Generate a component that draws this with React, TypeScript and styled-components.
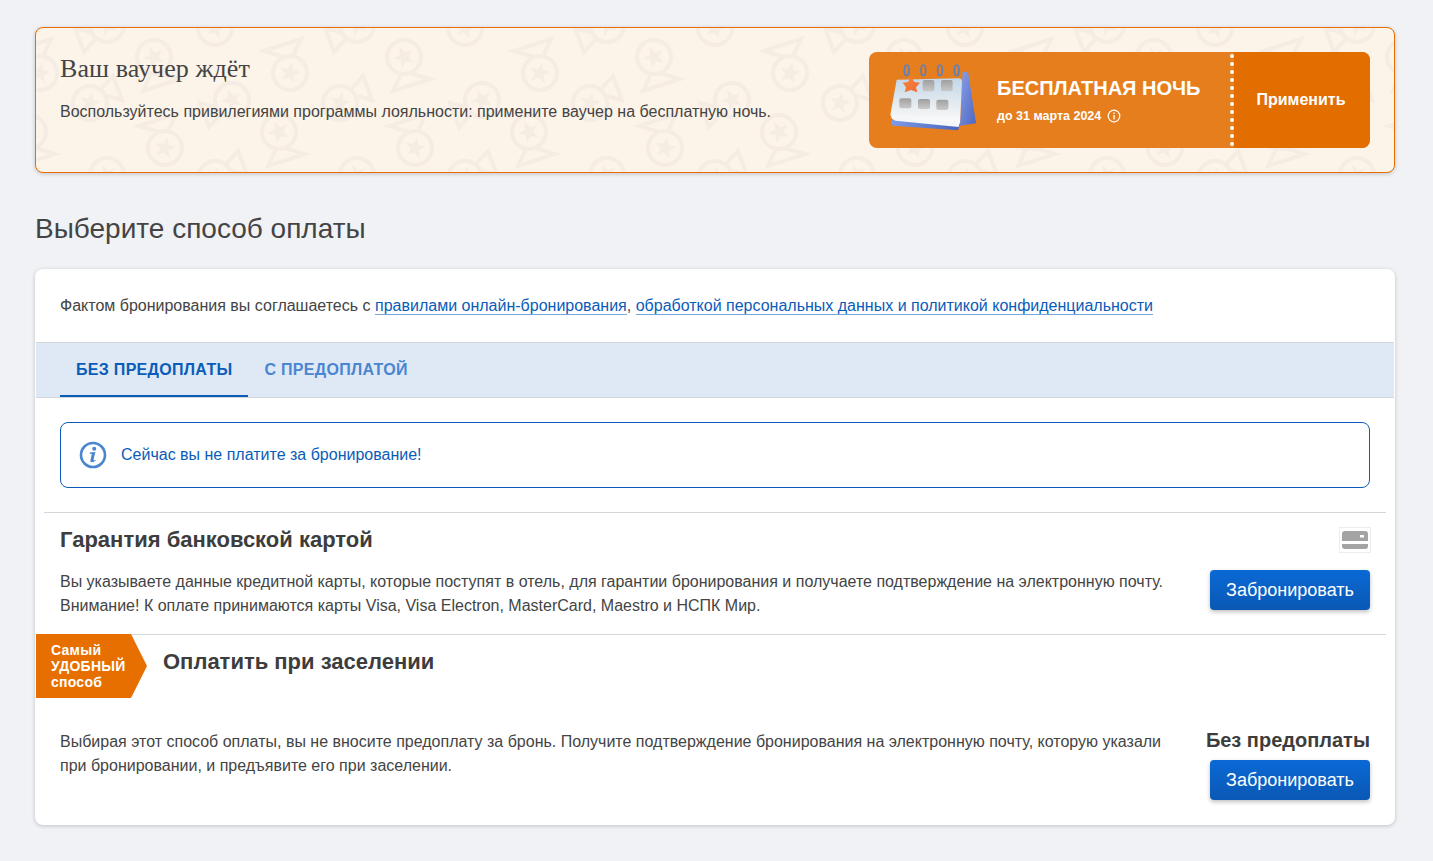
import React from 'react'
import styled, { createGlobalStyle } from 'styled-components'

// medal wallpaper of the banner, one 250x150 tile
const medals = [
  { x: 4, y: 45, kind: 'a', turn: 0 },
  { x: 129, y: 120, kind: 'a', turn: 0 },
  { x: 118, y: 29, kind: 'a', turn: 180 },
  { x: 243, y: 104, kind: 'a', turn: 180 },
  { x: 54, y: 75, kind: 'c', turn: 0 },
  { x: 179, y: 0, kind: 'c', turn: 0 },
  { x: 71, y: 147, kind: 'c', turn: 180 },
  { x: 196, y: 72, kind: 'c', turn: 180 },
]

const medalUses = medals
  .flatMap((m) =>
    [-250, 0, 250].flatMap((dx) =>
      [-150, 0, 150].map(
        (dy) =>
          `<use href="#${m.kind}" transform="translate(${m.x + dx} ${m.y + dy}) rotate(${m.turn})"/>`
      )
    )
  )
  .join('')

const medalStar =
  '<path fill="#f5ece3" stroke="none" transform="rotate(12)" d="M0 -11 L2.7 -3.7 L10.5 -3.4 L4.4 1.4 L6.5 8.9 L0 4.6 L-6.5 8.9 L-4.4 1.4 L-10.5 -3.4 L-2.7 -3.7 Z"/>'

const medalTile = encodeURIComponent(`<svg xmlns="http://www.w3.org/2000/svg" width="250" height="150" viewBox="0 0 250 150">
<defs>
<g id="a" fill="none" stroke="#f5ece3" stroke-width="4"><circle r="17"/><path d="M3 -17 L11 -34 L-26 -22 L-6 -16"/>${medalStar}</g>
<g id="c" fill="none" stroke="#f5ece3" stroke-width="4"><circle r="17"/><path d="M11 -14 L23 -27 L32 -3 L17 -7"/>${medalStar}</g>
</defs>${medalUses}</svg>`)

const GlobalStyle = createGlobalStyle`
  html, body {
    margin: 0;
    padding: 0;
    background: #f0f2f6;
  }
  body {
    font-family: "Liberation Sans", Arial, sans-serif;
    color: #444;
  }
  * {
    box-sizing: border-box;
  }
`

const Page = styled.div`
  width: 1433px;
  height: 861px;
  padding: 27px 38px 0 35px;
`

const Banner = styled.section`
  display: flex;
  justify-content: space-between;
  height: 146px;
  padding: 24px;
  background-color: #fcf3e9;
  background-image: url("data:image/svg+xml,${medalTile}");
  border: 1px solid #e66f00;
  border-radius: 8px;
  box-shadow: 0 1px 4px rgba(0, 0, 0, 0.2);
`

const BannerText = styled.div`
  display: flex;
  flex-direction: column;
`

const BannerTitle = styled.h2`
  margin: 1px 0 0;
  font-family: "Liberation Serif", "Times New Roman", serif;
  font-size: 26px;
  line-height: 32px;
  letter-spacing: 0.07px;
  font-weight: 400;
  color: #444;
`

const BannerNote = styled.p`
  margin: 15px 0 0;
  font-size: 16px;
  line-height: 24px;
  color: #444;
`

const Voucher = styled.div`
  display: flex;
  width: 501px;
  height: 96px;
  border-radius: 8px;
  overflow: hidden;
  color: #fff;
  background: #e67e1d;
`

const VoucherMain = styled.div`
  display: flex;
  align-items: center;
  flex: 1;
  margin: 2px 0;
  padding-left: 11px;
  border-right: 4px dotted #fff;
`

const VoucherArt = styled.svg`
  flex: none;
  margin-top: -5px;
`

const VoucherCopy = styled.div`
  margin-left: 7px;
  margin-top: -1px;
`

const VoucherTitle = styled.div`
  font-size: 20px;
  line-height: 28px;
  font-weight: 700;
`

const VoucherDate = styled.div`
  display: flex;
  align-items: center;
  gap: 6px;
  margin-top: 4px;
  font-size: 12.5px;
  line-height: 20px;
  font-weight: 700;
`

const Apply = styled.div`
  display: flex;
  align-items: center;
  justify-content: center;
  width: 136px;
  margin: -2px 0;
  padding-right: 2px;
  background: #e36e00;
  font-size: 16px;
  font-weight: 700;
`

const Heading = styled.h1`
  margin: 38px 0 22px;
  font-size: 28px;
  line-height: 36px;
  font-weight: 400;
  color: #444;
`

const Card = styled.section`
  height: 556px;
  padding: 0 1px;
  background: #fff;
  border-radius: 8px;
  box-shadow: 0 1px 4px rgba(0, 0, 0, 0.2);
`

const Terms = styled.p`
  margin: 0;
  height: 73px;
  padding: 25px 24px 0;
  font-size: 16px;
  line-height: 24px;
  color: #444;
`

const TermsLink = styled.a`
  color: #0a5cb8;
  border-bottom: 1px solid #7ba6d8;
  text-decoration: none;
`

const Tabs = styled.div`
  display: flex;
  height: 56px;
  padding-left: 24px;
  background: #dfe9f6;
  border-top: 1px solid #d3d6da;
  border-bottom: 1px solid #d3d6da;
`

const Tab = styled.div<{ $active?: boolean }>`
  display: flex;
  align-items: center;
  height: 54px;
  padding: 2px 16px 0;
  font-size: 16px;
  letter-spacing: 0.3px;
  font-weight: 700;
  color: ${({ $active }) => ($active ? '#0a5cb8' : '#4a86cf')};
  border-bottom: 2px solid ${({ $active }) => ($active ? '#0a5cb8' : 'transparent')};
`

const Notice = styled.div`
  display: flex;
  align-items: center;
  gap: 14px;
  height: 66px;
  margin: 24px;
  padding: 0 18px;
  border: 1px solid #0a5cb8;
  border-radius: 8px;
  font-size: 16px;
  color: #0a5cb8;
`

const Option = styled.div`
  height: 122px;
  margin: 0 8px;
  padding: 0 16px;
  border-top: 1px solid #d3d6da;
`

const OptionHead = styled.div`
  display: flex;
  justify-content: space-between;
  align-items: flex-start;
  height: 57px;
  padding-top: 14px;
`

const OptionTitle = styled.h3`
  margin: 0;
  font-size: 22px;
  line-height: 26px;
  font-weight: 700;
  color: #3d3d3d;
`

const CardIcon = styled.div`
  display: flex;
  align-items: center;
  justify-content: center;
  width: 32px;
  height: 26px;
  margin-right: -1px;
  border: 1px solid #ececec;
`

const OptionBody = styled.div`
  display: flex;
  justify-content: space-between;
  align-items: flex-start;
`

const OptionText = styled.p`
  margin: 0;
  width: 1120px;
  font-size: 16px;
  line-height: 24px;
  color: #444;
`

const BookButton = styled.button`
  width: 160px;
  height: 40px;
  padding: 0;
  border: 0;
  border-radius: 4px;
  font-family: inherit;
  font-size: 18px;
  color: #fff;
  background: linear-gradient(#0a69d6, #0a58b4);
  box-shadow: 0 2px 4px rgba(0, 0, 0, 0.25);
`

const PayRule = styled.div`
  height: 1px;
  margin-right: 8px;
  background: #d3d6da;
`

const PayHead = styled.div`
  display: flex;
  align-items: flex-start;
  gap: 16px;
  height: 96px;
  margin-top: -1px;
`

const Badge = styled.div`
  width: 111px;
  height: 64px;
  padding: 8px 0 0 15px;
  background: #e66f00;
  clip-path: polygon(0 0, 95px 0, 100% 50%, 95px 100%, 0 100%);
  color: #fff;
  font-size: 14px;
  letter-spacing: 0.25px;
  line-height: 16px;
  font-weight: 700;
`

const PayTitle = styled(OptionTitle)`
  margin-top: 15px;
`

const PayBody = styled(OptionBody)`
  padding: 0 24px;
`

const PaySide = styled.div`
  display: flex;
  flex-direction: column;
  align-items: flex-end;
  gap: 6px;
`

const PriceNote = styled.div`
  margin-top: -4px;
  font-size: 20px;
  line-height: 28px;
  font-weight: 700;
  color: #3d3d3d;
`

function CalendarArt() {
  return (
    <VoucherArt width="110" height="85" viewBox="0 0 330 255">
      <defs>
        <linearGradient id="calBack" x1="0" y1="0" x2="1" y2="1">
          <stop offset="0" stopColor="#86a0ea" />
          <stop offset="1" stopColor="#4f66c0" />
        </linearGradient>
        <linearGradient id="calCover" x1="0" y1="0" x2="1" y2="0">
          <stop offset="0" stopColor="#7d9be6" />
          <stop offset="1" stopColor="#4a63bd" />
        </linearGradient>
        <linearGradient id="calPage" x1="0" y1="0" x2="0" y2="1">
          <stop offset="0" stopColor="#c3d7e8" />
          <stop offset="0.6" stopColor="#e6ecf0" />
          <stop offset="1" stopColor="#fbfbfb" />
        </linearGradient>
        <linearGradient id="calCell" x1="0" y1="0" x2="0" y2="1">
          <stop offset="0" stopColor="#9f9f9f" />
          <stop offset="1" stopColor="#c9c9c9" />
        </linearGradient>
        <linearGradient id="calStar" x1="0" y1="0" x2="1" y2="1">
          <stop offset="0" stopColor="#f2873f" />
          <stop offset="1" stopColor="#f4682f" />
        </linearGradient>
      </defs>
      <path d="M248 50 L264 50 L288 205 L240 212 Z" fill="url(#calBack)" />
      <path d="M36 194 L240 208 L234 226 L40 212 Q30 208 36 194 Z" fill="url(#calCover)" />
      <path d="M32 178 L240 200 L236 216 L46 197 Q32 192 32 178 Z" fill="#f4f6f8" />
      <path d="M50 74 L236 70 Q246 70 246 80 L240 204 L38 184 Q30 182 32 174 Z" fill="url(#calPage)" />
      {[80, 130, 180, 230].map((x) => (
        <ellipse key={x} cx={x} cy="46" rx="7" ry="16" fill="none" stroke="#5f7fbc" strokeWidth="5" />
      ))}
      <path
        d="M93 64 L103 81 L120 83 L108 97 L112 112 L93 105 L74 112 L78 97 L68 83 L84 81 Z"
        fill="url(#calStar)"
      />
      <rect x="128" y="75" width="35" height="34" rx="6" fill="url(#calCell)" />
      <rect x="183" y="75" width="35" height="34" rx="6" fill="url(#calCell)" />
      <rect x="58" y="130" width="36" height="30" rx="6" fill="url(#calCell)" />
      <rect x="114" y="132" width="36" height="30" rx="6" fill="url(#calCell)" />
      <rect x="169" y="134" width="36" height="31" rx="6" fill="url(#calCell)" />
    </VoucherArt>
  )
}

function SmallInfo() {
  return (
    <svg width="14" height="14" viewBox="0 0 14 14">
      <circle cx="7" cy="7" r="5.8" fill="none" stroke="#fff" strokeWidth="1.2" />
      <rect x="6.3" y="6" width="1.4" height="4.4" fill="#fff" />
      <rect x="6.3" y="3.6" width="1.4" height="1.4" fill="#fff" />
    </svg>
  )
}

function NoticeIcon() {
  return (
    <svg width="28" height="28" viewBox="0 0 28 28">
      <circle cx="14" cy="14" r="12" fill="none" stroke="#4a86cf" strokeWidth="2.6" />
      <path
        d="M10.8 11.6 L16.4 11 L14.6 18.6 Q14.4 19.6 15.2 19.4 L16.4 18.8 L16.6 19.8 Q14.6 21.4 12.6 21.2 Q11 21 11.4 19.2 L12.8 13 L10.8 12.8 Z"
        fill="#4a86cf"
      />
      <circle cx="15.2" cy="7.8" r="2" fill="#4a86cf" />
    </svg>
  )
}

function BankCardIcon() {
  return (
    <svg width="26" height="18" viewBox="0 0 26 18">
      <path d="M3 0 H23 a3 3 0 0 1 3 3 V10 H0 V3 a3 3 0 0 1 3 -3 Z" fill="#a3a3a3" />
      <rect x="18" y="4" width="4" height="2.5" fill="#fff" />
      <path d="M0 13 H26 V15 a3 3 0 0 1 -3 3 H3 a3 3 0 0 1 -3 -3 Z" fill="#a3a3a3" />
    </svg>
  )
}

export default function App() {
  return (
    <Page>
      <GlobalStyle />
      <Banner>
        <BannerText>
          <BannerTitle>Ваш ваучер ждёт</BannerTitle>
          <BannerNote>
            Воспользуйтесь привилегиями программы лояльности: примените ваучер на бесплатную ночь.
          </BannerNote>
        </BannerText>
        <Voucher>
          <VoucherMain>
            <CalendarArt />
            <VoucherCopy>
              <VoucherTitle>БЕСПЛАТНАЯ НОЧЬ</VoucherTitle>
              <VoucherDate>
                до 31 марта 2024
                <SmallInfo />
              </VoucherDate>
            </VoucherCopy>
          </VoucherMain>
          <Apply>Применить</Apply>
        </Voucher>
      </Banner>

      <Heading>Выберите способ оплаты</Heading>

      <Card>
        <Terms>
          Фактом бронирования вы соглашаетесь с{' '}
          <TermsLink href="#">правилами онлайн-бронирования</TermsLink>,{' '}
          <TermsLink href="#">обработкой персональных данных и политикой конфиденциальности</TermsLink>
        </Terms>
        <Tabs>
          <Tab $active>БЕЗ ПРЕДОПЛАТЫ</Tab>
          <Tab>С ПРЕДОПЛАТОЙ</Tab>
        </Tabs>
        <Notice>
          <NoticeIcon />
          Сейчас вы не платите за бронирование!
        </Notice>
        <Option>
          <OptionHead>
            <OptionTitle>Гарантия банковской картой</OptionTitle>
            <CardIcon>
              <BankCardIcon />
            </CardIcon>
          </OptionHead>
          <OptionBody>
            <OptionText>
              Вы указываете данные кредитной карты, которые поступят в отель, для гарантии бронирования и получаете подтверждение на электронную почту.
              <br />
              Внимание! К оплате принимаются карты Visa, Visa Electron, MasterCard, Maestro и НСПК Мир.
            </OptionText>
            <BookButton>Забронировать</BookButton>
          </OptionBody>
        </Option>
        <PayRule />
        <PayHead>
          <Badge>
            Самый
            <br />
            УДОБНЫЙ
            <br />
            способ
          </Badge>
          <PayTitle>Оплатить при заселении</PayTitle>
        </PayHead>
        <PayBody>
          <OptionText>
            Выбирая этот способ оплаты, вы не вносите предоплату за бронь. Получите подтверждение бронирования на электронную почту, которую указали при бронировании, и предъявите его при заселении.
          </OptionText>
          <PaySide>
            <PriceNote>Без предоплаты</PriceNote>
            <BookButton>Забронировать</BookButton>
          </PaySide>
        </PayBody>
      </Card>
    </Page>
  )
}
